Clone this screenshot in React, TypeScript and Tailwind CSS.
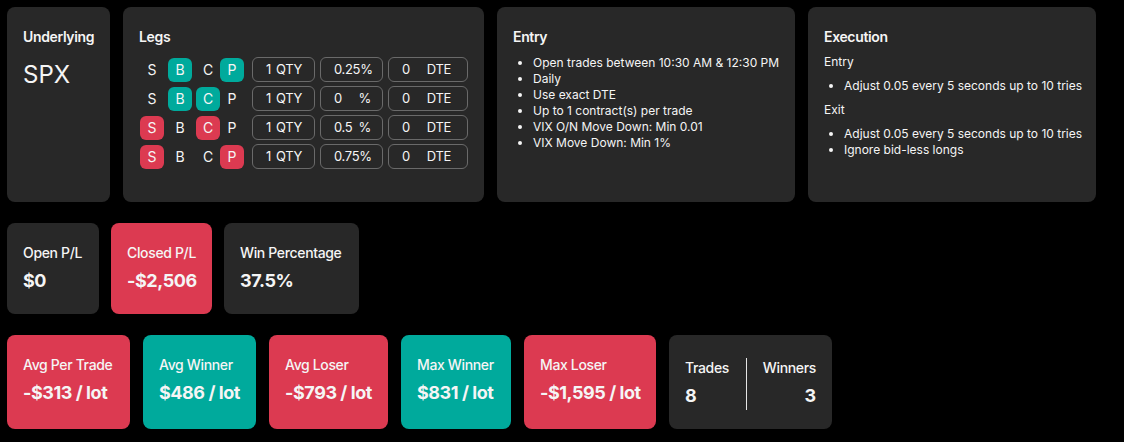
import React from "react";

const RED = "bg-[#dc3a51]";
const TEAL = "bg-[#00aa9c]";
const DARK = "bg-[#282828]";

type Leg = {
  side: "S" | "B";
  type: "C" | "P";
  qty: string;
  pct: string;
  dte: string;
};

const legs: Leg[] = [
  { side: "B", type: "P", qty: "1", pct: "0.25", dte: "0" },
  { side: "B", type: "C", qty: "1", pct: "0", dte: "0" },
  { side: "S", type: "C", qty: "1", pct: "0.5", dte: "0" },
  { side: "S", type: "P", qty: "1", pct: "0.75", dte: "0" },
];

const Toggle = ({ label, active, color, className = "" }: { label: string; active: boolean; color: string; className?: string }) => (
  <div
    className={`flex h-6 w-6 items-center justify-center rounded-md text-sm ${active ? color : ""} ${className}`}
  >
    {label}
  </div>
);

const Field = ({ value, suffix, width, pr }: { value: string; suffix: string; width: string; pr: string }) => (
  <div className={`flex h-[25px] items-center justify-between rounded-md border border-[#6a6a6a] pl-[13px] text-[13px] tracking-tight ${width} ${pr}`}>
    <span>{value}</span>
    <span>{suffix}</span>
  </div>
);

const LegRow = ({ leg }: { leg: Leg }) => {
  const sideColor = leg.side === "S" ? RED : TEAL;
  return (
    <div className="flex items-center">
      <Toggle label="S" active={leg.side === "S"} color={sideColor} />
      <Toggle label="B" active={leg.side === "B"} color={sideColor} className="ml-1" />
      <Toggle label="C" active={leg.type === "C"} color={sideColor} className="ml-1" />
      <Toggle label="P" active={leg.type === "P"} color={sideColor} />
      <div className="ml-2 flex gap-[5px]">
        <Field value={leg.qty} suffix="QTY" width="w-[63px]" pr="pr-3" />
        <Field value={leg.pct} suffix="%" width="w-[63px]" pr="pr-[11px]" />
        <Field value={leg.dte} suffix="DTE" width="w-[80px]" pr="pr-4" />
      </div>
    </div>
  );
};

const Stat = ({ label, value, bg }: { label: string; value: string; bg: string }) => (
  <div className={`rounded-lg ${bg} whitespace-nowrap px-4 pt-5`}>
    <div className="text-sm font-medium leading-5 tracking-tight">{label}</div>
    <div className="mt-1 text-lg font-bold leading-7 tracking-tight">{value}</div>
  </div>
);

export default function App() {
  return (
    <div
      className="min-h-screen bg-black p-[7px] text-neutral-100"
      style={{ fontFamily: "Inter, 'Noto Sans', sans-serif" }}
    >
      {/* top row */}
      <div className="flex h-[195px] gap-[13px]">
        <div className={`w-[103px] rounded-lg ${DARK} px-4 pt-5`}>
          <div className="text-sm font-semibold leading-5 tracking-tight">Underlying</div>
          <div className="mt-3 text-2xl leading-8">SPX</div>
        </div>

        <div className={`w-[361px] rounded-lg ${DARK} px-4 pt-5`}>
          <div className="text-sm font-semibold leading-5 tracking-tight">Legs</div>
          <div className="mt-2.5 flex flex-col gap-1 pl-px">
            {legs.map((leg, i) => (
              <LegRow key={i} leg={leg} />
            ))}
          </div>
        </div>

        <div className={`w-[298px] whitespace-nowrap rounded-lg ${DARK} px-4 pt-5`}>
          <div className="text-sm font-semibold leading-5 tracking-tight">Entry</div>
          <ul className="mt-2 list-disc pl-5 text-xs leading-4">
            <li>Open trades between 10:30 AM &amp; 12:30 PM</li>
            <li>Daily</li>
            <li>Use exact DTE</li>
            <li>Up to 1 contract(s) per trade</li>
            <li>VIX O/N Move Down: Min 0.01</li>
            <li>VIX Move Down: Min 1%</li>
          </ul>
        </div>

        <div className={`w-[288px] whitespace-nowrap rounded-lg ${DARK} px-4 pt-5`}>
          <div className="text-sm font-semibold leading-5 tracking-tight">Execution</div>
          <div className="mt-[7px] text-xs leading-4">Entry</div>
          <ul className="mt-2 list-disc pl-5 text-xs leading-4">
            <li>Adjust 0.05 every 5 seconds up to 10 tries</li>
          </ul>
          <div className="mt-2 text-xs leading-4">Exit</div>
          <ul className="mt-2 list-disc pl-5 text-xs leading-4">
            <li>Adjust 0.05 every 5 seconds up to 10 tries</li>
            <li>Ignore bid-less longs</li>
          </ul>
        </div>
      </div>

      {/* summary row */}
      <div className="mt-[21px] flex h-[91px] gap-3">
        <Stat label="Open P/L" value="$0" bg={`${DARK} w-[92px]`} />
        <Stat label="Closed P/L" value="-$2,506" bg={`${RED} w-[101px]`} />
        <Stat label="Win Percentage" value="37.5%" bg={`${DARK} w-[135px]`} />
      </div>

      {/* per lot row */}
      <div className="mt-[21px] flex h-[94px] gap-[13px]">
        <Stat label="Avg Per Trade" value="-$313 / lot" bg={`${RED} w-[123px]`} />
        <Stat label="Avg Winner" value="$486 / lot" bg={`${TEAL} w-[113px]`} />
        <Stat label="Avg Loser" value="-$793 / lot" bg={`${RED} w-[119px]`} />
        <Stat label="Max Winner" value="$831 / lot" bg={`${TEAL} w-[110px]`} />
        <Stat label="Max Loser" value="-$1,595 / lot" bg={`${RED} w-[132px]`} />
        <div className={`flex w-[163px] rounded-lg ${DARK} px-4 pt-[23px]`}>
          <div className="flex h-[52px] flex-1">
            <div className="flex-1 pr-4">
              <div className="text-sm font-medium leading-5 tracking-tight">Trades</div>
              <div className="mt-1 text-lg font-bold leading-7">8</div>
            </div>
            <div className="w-px bg-neutral-200" />
            <div className="flex-1 pl-4 text-right">
              <div className="text-sm font-medium leading-5 tracking-tight">Winners</div>
              <div className="mt-1 text-lg font-bold leading-7">3</div>
            </div>
          </div>
        </div>
      </div>
    </div>
  );
}
